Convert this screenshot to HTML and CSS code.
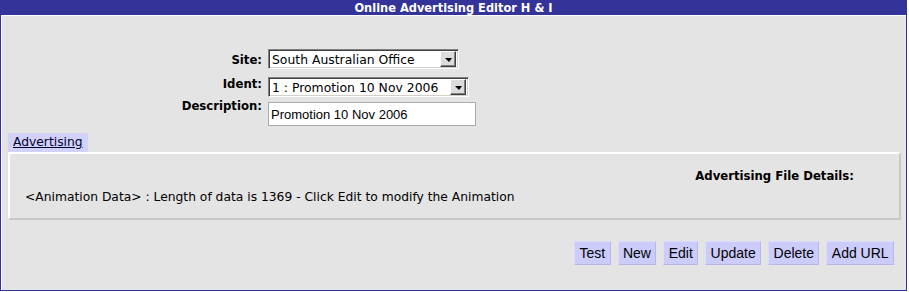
FILE: index.html
```html
<!DOCTYPE html>
<html lang="en">
  <head>
    <meta charset="UTF-8" />
    <title>Online Advertising Editor</title>
    <link rel="stylesheet" href="styles.css">
  </head>
  <body>
    <div class="window">
      <div class="titlebar">Online Advertising Editor H &amp; I</div>
      <div class="content">
        <div class="form-grid">
          <label class="lbl lbl-site">Site:</label>
          <div class="combo combo-site">
            <span class="combo-text">South Australian Office</span>
            <span class="combo-btn"><i class="arrow"></i></span>
          </div>
          <label class="lbl lbl-ident">Ident:</label>
          <div class="combo combo-ident">
            <span class="combo-text">1 : Promotion 10 Nov 2006</span>
            <span class="combo-btn"><i class="arrow"></i></span>
          </div>
          <label class="lbl lbl-desc">Description:</label>
          <input class="text-input" type="text" value="Promotion 10 Nov 2006">
        </div>

        <div class="tabs">
          <a class="tab" href="#">Advertising</a>
        </div>
        <div class="panel">
          <div class="panel-head">Advertising File Details:</div>
          <div class="panel-text">&lt;Animation Data&gt; : Length of data is 1369 - Click Edit to modify the Animation</div>
        </div>

        <div class="actions">
          <button class="btn">Test</button>
          <button class="btn">New</button>
          <button class="btn">Edit</button>
          <button class="btn">Update</button>
          <button class="btn">Delete</button>
          <button class="btn">Add URL</button>
        </div>
      </div>
    </div>
  </body>
</html>
```

FILE: styles.css
```css
body {
  margin: 0;
  padding: 0;
  background-color: #fff;
  font-family: 'DejaVu Sans', sans-serif;
  font-size: 12px;
  color: #000;
}

.window {
  width: 907px;
  height: 291px;
  box-sizing: border-box;
  border: 1px solid #333399;
  border-top: none;
  display: flex;
  flex-direction: column;
}

.titlebar {
  height: 15px;
  background-color: #333399;
  color: #fff;
  font-family: 'DejaVu Sans Condensed', 'DejaVu Sans', sans-serif;
  font-weight: bold;
  font-size: 12.7px;
  line-height: 15px;
  text-align: center;
}

.content {
  flex: 1;
  background-color: #e4e4e4;
  border-top: 1px solid #fff;
  border-left: 1px solid #fff;
}

/* form at the top */
.form-grid {
  display: grid;
  grid-template-columns: 93px auto;
  grid-template-rows: 28px 25px 24px;
  column-gap: 6px;
  align-items: start;
  justify-items: start;
  margin: 33px 0 0 167px;
}

.lbl {
  justify-self: end;
  font-weight: bold;
  font-size: 11.7px;
  line-height: 14px;
}

.lbl-site {
  margin-top: 4px;
}

.lbl-desc {
  margin-top: -3px;
}

.combo {
  display: flex;
  align-items: center;
  height: 20px;
  box-sizing: border-box;
  background-color: #fff;
  border: 1px solid;
  border-color: #808080 #fff #fff #808080;
  box-shadow: inset 1px 1px 0 #404040, inset -1px -1px 0 #d4d0c8;
  padding: 0 2px 0 3px;
}

.combo-site {
  width: 191px;
}

.combo-ident {
  width: 201px;
}

.combo-text {
  flex: 1;
  font-size: 12.4px;
  white-space: nowrap;
}

.combo-btn {
  width: 16px;
  height: 16px;
  box-sizing: border-box;
  background-color: #dcdcdc;
  border: 1px solid;
  border-color: #fff #404040 #404040 #fff;
  box-shadow: inset -1px -1px 0 #808080;
  display: flex;
  align-items: center;
  justify-content: center;
}

.arrow {
  width: 0;
  height: 0;
  border-left: 4px solid transparent;
  border-right: 3px solid transparent;
  border-top: 4px solid #000;
  margin-top: 1px;
}

.text-input {
  width: 208px;
  height: 24px;
  box-sizing: border-box;
  margin: 0;
  padding: 0 2px;
  border: 1px solid #a5acb2;
  background-color: #fff;
  font-family: 'Liberation Sans', Arial, sans-serif;
  font-size: 13px;
  color: #000;
}

/* tab + panel */
.tabs {
  display: flex;
  margin: 7px 0 0 6px;
}

.tab {
  display: block;
  height: 19px;
  padding: 0 5px;
  background-color: #d2d2f8;
  color: #000033;
  font-size: 12.3px;
  line-height: 19px;
}

.panel {
  width: 893px;
  height: 68px;
  box-sizing: border-box;
  margin-left: 6px;
  border: 2px solid;
  border-color: #fff #c8c8c8 #c8c8c8 #fff;
  padding: 14px 0 0 15px;
}

.panel-head {
  text-align: right;
  padding-right: 45px;
  font-weight: bold;
  font-size: 11.7px;
  line-height: 16px;
}

.panel-text {
  margin-top: 5px;
  font-size: 12.3px;
  line-height: 16px;
}

/* buttons */
.actions {
  display: flex;
  justify-content: flex-end;
  gap: 7px;
  margin-top: 21px;
  padding-right: 12px;
}

.btn {
  height: 24px;
  margin: 0;
  padding: 0 4.4px;
  background-color: #ccccfb;
  border: 1px solid;
  border-color: #dcdcff #b8b8e8 #b8b8e8 #dcdcff;
  font-family: 'Liberation Sans', Arial, sans-serif;
  font-size: 14px;
  color: #000;
}
```
